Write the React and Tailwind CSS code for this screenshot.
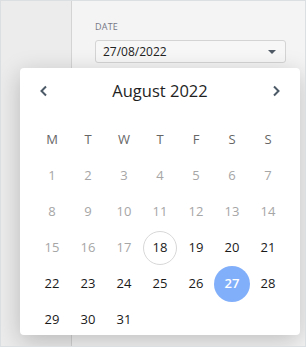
const days = Array.from({ length: 31 }, (_, i) => i + 1)
const heads = ["M", "T", "W", "T", "F", "S", "S"]

function Chevron({ dir }) {
    return (
        <svg width="10" height="12" viewBox="0 0 10 12" fill="none">
            <path
                d={dir === "left" ? "M7 1.5 L2.5 6 L7 10.5" : "M3 1.5 L7.5 6 L3 10.5"}
                stroke="#4b5a66"
                strokeWidth="2"
            />
        </svg>
    )
}

function Day({ n }) {
    if (n === 27) {
        return (
            <div className="h-9 flex items-center justify-center">
                <span className="w-9 h-9 rounded-full bg-[#82affa] text-white font-semibold flex items-center justify-center">27</span>
            </div>
        )
    }
    if (n === 18) {
        return (
            <div className="h-9 flex items-center justify-center">
                <span className="w-[34px] h-[34px] rounded-full border border-[#d8d8d8] text-[#1a1a1a] flex items-center justify-center">18</span>
            </div>
        )
    }
    const past = n < 18
    return (
        <div className={`h-9 flex items-center justify-center ${past ? "text-[#a6a6a6]" : "text-[#1a1a1a]"}`}>
            {n}
        </div>
    )
}

export default function App() {
    return (
        <div
            className="relative w-[306px] h-[347px] border border-[#dcdfe2] bg-[#f4f4f4] flex overflow-hidden"
            style={{ fontFamily: '"Open Sans", sans-serif' }}
        >
            <div className="w-[71px] h-full bg-[#ececec] border-r border-[#d4d4d4]" />
            <div className="flex-1 pt-[21px] pl-[23px] pr-[18px]">
                <div className="text-[9px] tracking-wide text-[#777786] leading-none mb-[9px]">DATE</div>
                <div className="h-[23px] w-[191px] rounded-[3px] border border-[#d4d4d4] bg-[#f7f7f7] flex items-center justify-between pl-[7px] pr-[9px] text-[12px] text-[#222]">
                    <span>27/08/2022</span>
                    <span className="w-0 h-0 border-l-[4px] border-r-[4px] border-t-[4px] border-l-transparent border-r-transparent border-t-[#505a66]" />
                </div>
            </div>

            <div className="absolute left-[19px] top-[67px] w-[280px] h-[267px] bg-white rounded-[4px] shadow-[0_6px_24px_rgba(0,0,0,0.22)] px-[14px]">
                <div className="h-[46px] flex items-center justify-between px-[5px]">
                    <Chevron dir="left" />
                    <span className="text-[16.5px] text-[#1f1f1f]">August 2022</span>
                    <Chevron dir="right" />
                </div>
                <div className="grid grid-cols-7 text-[13px] mt-[8px]">
                    {heads.map((h, i) => (
                        <div key={i} className="h-9 flex items-center justify-center text-[#666]">{h}</div>
                    ))}
                    {days.map((d) => (
                        <Day key={d} n={d} />
                    ))}
                </div>
            </div>
        </div>
    )
}
